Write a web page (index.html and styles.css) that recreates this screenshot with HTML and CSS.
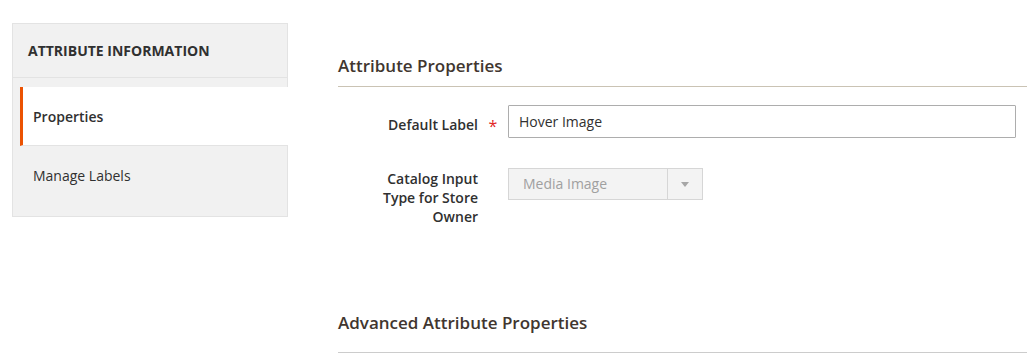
FILE: index.html
```html
<!DOCTYPE html>
<html>
<head>
  <title>Product Attribute - Properties</title>
  <link rel="stylesheet" href="styles.css">
</head>
<body>
  <div class="page">
    <div class="side-nav">
      <div class="side-title">Attribute Information</div>
      <ul class="tabs">
        <li class="tab active">Properties</li>
        <li class="tab">Manage Labels</li>
      </ul>
    </div>

    <div class="main">
      <h2 class="section-title">Attribute Properties</h2>

      <div class="field">
        <label class="field-label" for="default-label">Default Label</label>
        <span class="required">*</span>
        <div class="control">
          <input type="text" id="default-label" class="text-input" value="Hover Image" />
        </div>
      </div>

      <div class="field">
        <label class="field-label multiline">Catalog Input Type for Store Owner</label>
        <span class="required"></span>
        <div class="control">
          <div class="select disabled">
            <span class="select-value">Media Image</span>
            <span class="select-arrow"></span>
          </div>
        </div>
      </div>

      <h2 class="section-title advanced">Advanced Attribute Properties</h2>
    </div>
  </div>
</body>
</html>
```

FILE: styles.css
```css
body {
  margin: 0;
  font-family: "Open Sans", "Liberation Sans", Arial, sans-serif;
  font-size: 14px;
  color: #303030;
  background: #fff;
}

.page {
  display: flex;
  gap: 50px;
  padding: 23px 0 0 12px;
}

/* left tabs */
.side-nav {
  width: 274px;
  flex: none;
  align-self: flex-start;
  background-color: #f1f1f1;
  border: 1px solid #e3e3e3;
}

.side-title {
  height: 53px;
  line-height: 53px;
  padding-left: 15px;
  font-weight: 700;
  font-size: 14px;
  text-transform: uppercase;
  color: #303030;
  border-bottom: 1px solid #e3e3e3;
}

.tabs {
  list-style-type: none;
  margin: 9px 0 12px 7px;
  padding: 0;
}

.tab {
  height: 58px;
  line-height: 60px;
  padding-left: 10px;
  border-left: 3px solid transparent;
  border-bottom: 1px solid #e3e3e3;
  color: #303030;
}

.tab.active {
  background-color: #fff;
  border-left-color: #eb5202;
  font-weight: 600;
  line-height: 60px;
  margin-right: -1px;
}

.tab:last-child {
  border-bottom: none;
}

/* main column */
.main {
  flex: 1;
}

.section-title {
  margin: 0;
  padding: 33px 0 10px 0;
  font-size: 17px;
  font-weight: 600;
  line-height: 20px;
  color: #41362f;
  border-bottom: 1px solid #cac3b4;
}

.section-title.advanced {
  margin-top: 87px;
  padding-top: 0;
  padding-bottom: 19px;
  border-bottom-color: #cccccc;
}

.field {
  display: flex;
  align-items: flex-start;
  margin-top: 18px;
}

.field + .field {
  margin-top: 30px;
}

.field-label {
  width: 110px;
  margin-left: 30px;
  padding-top: 10px;
  text-align: right;
  font-weight: 600;
  line-height: 19px;
  color: #303030;
}

.field-label.multiline {
  padding-top: 1px;
}

.required {
  width: 30px;
  flex: none;
  padding-top: 12px;
  text-align: center;
  color: #e22626;
  font-size: 16px;
  line-height: 19px;
}

.control {
  flex: 1;
  margin-right: 11px;
}

.text-input {
  box-sizing: border-box;
  width: 100%;
  height: 33px;
  padding: 0 10px;
  border: 1px solid #adadad;
  border-radius: 1px;
  font-family: inherit;
  font-size: 14px;
  color: #303030;
}

.select {
  display: flex;
  box-sizing: border-box;
  width: 195px;
  height: 32px;
  background-color: #f3f3f3;
  border: 1px solid #d6d6d6;
}

.select-value {
  flex: 1;
  padding-left: 14px;
  line-height: 30px;
  color: #a0a0a0;
}

.select-arrow {
  width: 34px;
  border-left: 1px solid #d6d6d6;
  position: relative;
}

.select-arrow::after {
  content: "";
  position: absolute;
  left: 13px;
  top: 13px;
  border-left: 4px solid transparent;
  border-right: 4px solid transparent;
  border-top: 5px solid #a6a6a6;
}
```
